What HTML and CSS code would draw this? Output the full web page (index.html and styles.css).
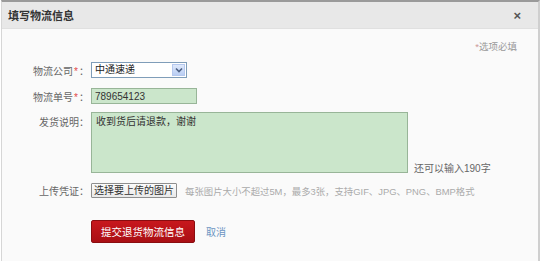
FILE: index.html
```html
<!DOCTYPE html>
<html lang="zh-CN">
<head>
	<meta charset="UTF-8">
	<title>填写物流信息</title>
	<link rel="stylesheet" href="styles.css">
</head>
<body>
	<div class="dialog">
		<div class="dialog-hd">
			<span class="dialog-title">填写物流信息</span>
			<a href="javascript:;" class="dialog-close">×</a>
		</div>
		<div class="dialog-bd">
			<p class="tip-need"><i>*</i>选项必填</p>
			<div class="form-row row-company">
				<label class="form-label">物流公司<i>*</i>：</label>
				<div class="fake-select">
					<span class="fake-select-val">中通速递</span>
					<span class="fake-select-btn">
						<svg width="8" height="6" viewBox="0 0 8 6"><path d="M1 1.5 L4 4.5 L7 1.5" fill="none" stroke="#4d6185" stroke-width="1.6"/></svg>
					</span>
				</div>
			</div>
			<div class="form-row row-no">
				<label class="form-label">物流单号<i>*</i>：</label>
				<input class="ipt-green ipt-no" type="text" value="789654123">
			</div>
			<div class="form-row row-desc">
				<label class="form-label">发货说明：</label>
				<textarea class="ipt-green ipt-desc">收到货后请退款，谢谢</textarea>
				<span class="word-left">还可以输入190字</span>
			</div>
			<div class="form-row row-upload">
				<label class="form-label">上传凭证：</label>
				<button class="btn-file" type="button">选择要上传的图片</button>
				<span class="upload-tip">每张图片大小不超过5M，最多3张，支持GIF、JPG、PNG、BMP格式</span>
			</div>
			<div class="form-row row-btns">
				<span class="form-label"></span>
				<a href="javascript:;" class="btn-submit">提交退货物流信息</a>
				<a href="javascript:;" class="btn-cancel">取消</a>
			</div>
		</div>
	</div>
</body>
</html>
```

FILE: styles.css
```css
*{
	margin: 0;
	padding: 0;
}
body{
	font-family: "Liberation Sans", "Noto Sans CJK SC", sans-serif;
	font-size: 10px;
	color: #555;
	background-color: #fff;
}
i{
	font-style: normal;
}
.dialog{
	width: 536px;
	height: 259px;
	margin-left: 1px;
	border-top: 2px solid #9a9a9a;
	border-left: 1px solid #d6d6d6;
	border-right: 2px solid #cfcfcf;
	background-color: #fafafa;
}
.dialog-hd{
	display: flex;
	align-items: center;
	justify-content: space-between;
	height: 26px;
	padding: 0 17px 0 6px;
	background-color: #e8e8e8;
	border-bottom: 1px solid #e0e0e0;
}
.dialog-title{
	font-size: 11px;
	font-weight: bold;
	color: #333;
}
.dialog-close{
	font-size: 13px;
	font-weight: bold;
	color: #555;
	text-decoration: none;
	line-height: 1;
}
.dialog-bd{
	padding-top: 11px;
}
.tip-need{
	height: 14px;
	line-height: 14px;
	padding-right: 21px;
	text-align: right;
	color: #999;
	font-size: 9.5px;
}
.tip-need i{
	color: #c99;
}
.form-row{
	display: flex;
	align-items: center;
}
.form-label{
	width: 87px;
	margin-right: 2px;
	text-align: right;
	color: #666;
	white-space: nowrap;
}
.form-label i{
	color: #e24848;
	margin: 0 1px;
}
.row-company{
	margin-top: 8px;
}
.fake-select{
	display: flex;
	align-items: center;
	justify-content: space-between;
	width: 94px;
	height: 14px;
	border: 1px solid #7f9db9;
	background-color: #fff;
	color: #222;
}
.fake-select-val{
	padding-left: 3px;
	line-height: 14px;
}
.fake-select-btn{
	display: flex;
	align-items: center;
	justify-content: center;
	width: 13px;
	height: 12px;
	margin-right: 1px;
	background: linear-gradient(#dfe9fb, #b9cdf3);
	border: 1px solid #b5c8ee;
	box-sizing: border-box;
}
.ipt-green{
	border: 1px solid #98b598;
	background-color: #cbe6cb;
	font-family: inherit;
	font-size: 10px;
	color: #333;
	outline: none;
}
.row-no{
	margin-top: 10px;
}
.ipt-no{
	width: 106px;
	height: 16px;
	padding-left: 3px;
	box-sizing: border-box;
}
.row-desc{
	align-items: flex-start;
	margin-top: 8px;
}
.row-desc .form-label{
	margin-top: 2px;
}
.ipt-desc{
	width: 317px;
	height: 61px;
	padding: 2px 4px;
	box-sizing: border-box;
	resize: none;
	line-height: 14px;
}
.word-left{
	align-self: flex-end;
	margin-left: 6px;
	margin-bottom: -2px;
	color: #666;
}
.row-upload{
	margin-top: 10px;
}
.btn-file{
	height: 15px;
	padding: 0 2px;
	border: 1px solid #8e8e8e;
	border-radius: 1px;
	background: linear-gradient(#fbfbfb, #e9e9e9);
	font-family: inherit;
	font-size: 10px;
	color: #333;
	line-height: 13px;
}
.upload-tip{
	margin-left: 8px;
	color: #aaa;
	font-size: 9.4px;
	white-space: nowrap;
}
.row-btns{
	margin-top: 22px;
}
.btn-submit{
	display: block;
	width: 104px;
	height: 23px;
	line-height: 23px;
	box-sizing: border-box;
	border: 1px solid #8a0d10;
	border-radius: 2px;
	background: linear-gradient(#c8181d, #a90f14);
	color: #fff;
	font-size: 10.5px;
	text-align: center;
	text-decoration: none;
}
.btn-cancel{
	margin-left: 11px;
	color: #6a94c2;
	text-decoration: none;
}
```
